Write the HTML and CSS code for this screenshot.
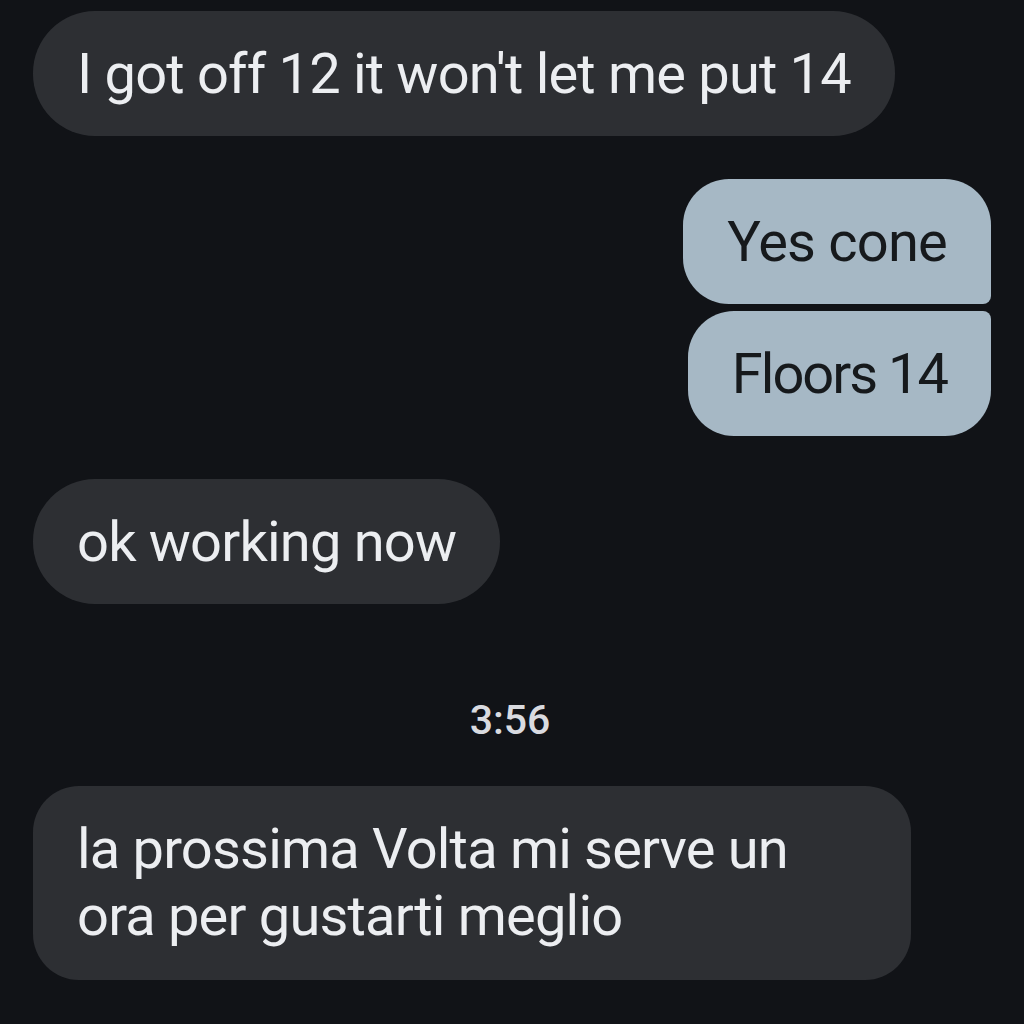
FILE: index.html
```html
<!DOCTYPE html>
<html lang="en">
<head>
    <meta charset="UTF-8">
    <meta name="viewport" content="width=device-width, initial-scale=1.0">
    <title>Messages</title>
    <link rel="stylesheet" href="styles.css">
</head>
<body>
    <div class="thread">
        <div class="group">
            <div class="bubble received">I got off 12 it won't let me put 14</div>
        </div>
        <div class="group outgoing">
            <div class="bubble sent first">Yes cone</div>
            <div class="bubble sent last tight">Floors 14</div>
        </div>
        <div class="group">
            <div class="bubble received">ok working now</div>
        </div>
        <div class="timestamp">3:56</div>
        <div class="group">
            <div class="bubble received wide">la prossima Volta mi serve un<br>ora per gustarti meglio</div>
        </div>
    </div>
</body>
</html>
```

FILE: styles.css
```css
body {
    margin: 0;
    background: #111317;
    font-family: Roboto, 'Noto Sans', sans-serif;
    min-height: 100vh;
}
.thread {
    display: flex;
    flex-direction: column;
    gap: 43px;
    padding: 11px 33px 0;
}
.group {
    display: flex;
    flex-direction: column;
    align-items: flex-start;
    gap: 7px;
}
.group.outgoing {
    align-items: flex-end;
}
.bubble {
    font-size: 56px;
    letter-spacing: -0.8px;
    line-height: 67px;
    padding: 30px 44px 28px;
    border-radius: 62px;
}
.received {
    background: #2d2f33;
    color: #eceef1;
}
.received.wide {
    width: 790px;
    padding-bottom: 30px;
    border-radius: 46px;
}
.sent {
    background: #a6b8c5;
    color: #16191c;
}
.sent.first {
    border-radius: 46px 46px 8px 46px;
}
.sent.last {
    border-radius: 46px 8px 46px 46px;
}
.sent.tight {
    letter-spacing: -2px;
}
.timestamp {
    text-align: center;
    color: #d9dbe0;
    font-size: 41px;
    font-weight: 500;
    line-height: 48px;
    margin: 49px 0 -1px;
    padding-right: 4px;
}
```
